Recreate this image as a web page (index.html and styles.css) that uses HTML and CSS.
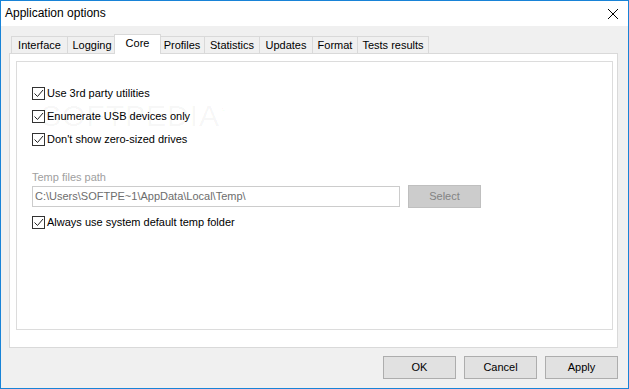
FILE: index.html
```html
<!DOCTYPE html>
<html lang="en">
<head>
  <meta charset="UTF-8" />
  <title>Application options</title>
  <link rel="stylesheet" href="styles.css">
</head>
<body>
  <div class="window">
    <div class="titlebar">
      <span class="title">Application options</span>
      <span class="close">
        <svg width="12" height="12" viewBox="0 0 12 12"><path d="M1 1 L11 11 M11 1 L1 11" stroke="#000" stroke-width="1" fill="none"/></svg>
      </span>
    </div>

    <div class="content">
      <div class="tabs">
        <div class="tab tab-interface">Interface</div>
        <div class="tab tab-logging">Logging</div>
        <div class="tab tab-core active">Core</div>
        <div class="tab tab-profiles">Profiles</div>
        <div class="tab tab-statistics">Statistics</div>
        <div class="tab tab-updates">Updates</div>
        <div class="tab tab-format">Format</div>
        <div class="tab tab-tests">Tests results</div>
      </div>

      <div class="panel">
        <div class="group">
          <div class="watermark">SOFTPEDIA<sup>®</sup></div>

          <div class="checks">
            <label class="check-row">
              <span class="box"><svg width="11" height="11" viewBox="0 0 11 11"><path d="M1.5 5.5 L4.5 8.5 L10 2" stroke="#222" stroke-width="1" fill="none"/></svg></span>
              Use 3rd party utilities
            </label>
            <label class="check-row">
              <span class="box"><svg width="11" height="11" viewBox="0 0 11 11"><path d="M1.5 5.5 L4.5 8.5 L10 2" stroke="#222" stroke-width="1" fill="none"/></svg></span>
              Enumerate USB devices only
            </label>
            <label class="check-row">
              <span class="box"><svg width="11" height="11" viewBox="0 0 11 11"><path d="M1.5 5.5 L4.5 8.5 L10 2" stroke="#222" stroke-width="1" fill="none"/></svg></span>
              Don't show zero-sized drives
            </label>
          </div>

          <div class="field-label">Temp files path</div>
          <div class="path-row">
            <div class="path-input">C:\Users\SOFTPE~1\AppData\Local\Temp\</div>
            <div class="btn disabled">Select</div>
          </div>

          <label class="check-row always">
            <span class="box"><svg width="11" height="11" viewBox="0 0 11 11"><path d="M1.5 5.5 L4.5 8.5 L10 2" stroke="#222" stroke-width="1" fill="none"/></svg></span>
            Always use system default temp folder
          </label>
        </div>
      </div>

      <div class="footer">
        <div class="btn">OK</div>
        <div class="btn">Cancel</div>
        <div class="btn">Apply</div>
      </div>
    </div>
  </div>
</body>
</html>
```

FILE: styles.css
```css
body {
  margin: 0;
  font-family: "Segoe UI", "Liberation Sans", Arial, sans-serif;
  font-size: 11px;
  color: #000;
  background: #f0f0f0;
}

.window {
  width: 629px;
  height: 389px;
  box-sizing: border-box;
  border: 1px solid #1883d7;
  background-color: #f0f0f0;
}

.titlebar {
  height: 25px;
  background-color: #fff;
  display: flex;
  align-items: center;
  justify-content: space-between;
  padding: 0 9px 0 4px;
}

.title {
  font-size: 12px;
  margin-top: -1px;
}

.close {
  display: flex;
  margin-top: 1px;
}

.content {
  padding: 8px 10px 0 8px;
}

.tabs {
  display: flex;
  align-items: flex-end;
  height: 19px;
  padding-left: 2px;
}

.tab {
  height: 17px;
  box-sizing: border-box;
  border: 1px solid #d9d9d9;
  border-bottom: none;
  margin-left: -1px;
  text-align: center;
  line-height: 16px;
  background-color: #f0f0f0;
}

.tab:first-child {
  margin-left: 0;
}

.tab-interface { width: 57px; }
.tab-logging { width: 50px; }
.tab-profiles { width: 46px; }
.tab-statistics { width: 56px; }
.tab-updates { width: 54px; }
.tab-format { width: 46px; }
.tab-tests { width: 72px; }

.tab.active {
  width: 47px;
  height: 20px;
  margin: 0 -1px -1px -3px;
  background-color: #fff;
  position: relative;
  z-index: 1;
  line-height: 17px;
}

.panel {
  height: 295px;
  box-sizing: border-box;
  border: 1px solid #d9d9d9;
  background-color: #fff;
  padding: 7px 4px 0 6px;
}

.group {
  height: 269px;
  box-sizing: border-box;
  border: 1px solid #dcdcdc;
  padding: 23px 15px 0 15px;
  position: relative;
}

.watermark {
  position: absolute;
  left: 24px;
  top: 39px;
  font-size: 30px;
  line-height: 30px;
  letter-spacing: 1px;
  color: rgba(0, 0, 0, 0.045);
  pointer-events: none;
}

.watermark sup {
  font-size: 10px;
  line-height: 0;
}

.checks {
  display: flex;
  flex-direction: column;
  gap: 7px;
}

.check-row {
  display: flex;
  align-items: center;
  height: 16px;
  gap: 2px;
}

.box {
  width: 13px;
  height: 13px;
  box-sizing: border-box;
  border: 1px solid #333;
  background-color: #fff;
  display: flex;
  align-items: center;
  justify-content: center;
}

.field-label {
  margin-top: 22px;
  height: 16px;
  line-height: 16px;
  color: #a0a0a0;
}

.path-row {
  display: flex;
  align-items: center;
  gap: 8px;
  height: 23px;
}

.path-input {
  width: 368px;
  height: 21px;
  box-sizing: border-box;
  border: 1px solid #cccccc;
  padding: 0 2px;
  line-height: 19px;
  color: #6d6d6d;
}

.btn {
  width: 73px;
  height: 23px;
  box-sizing: border-box;
  border: 1px solid #adadad;
  background-color: #e1e1e1;
  text-align: center;
  line-height: 21px;
}

.btn.disabled {
  background-color: #cccccc;
  border-color: #bfbfbf;
  color: #838383;
}

.always {
  margin-top: 6px;
}

.footer {
  display: flex;
  justify-content: flex-end;
  gap: 8px;
  margin-top: 8px;
}
```
